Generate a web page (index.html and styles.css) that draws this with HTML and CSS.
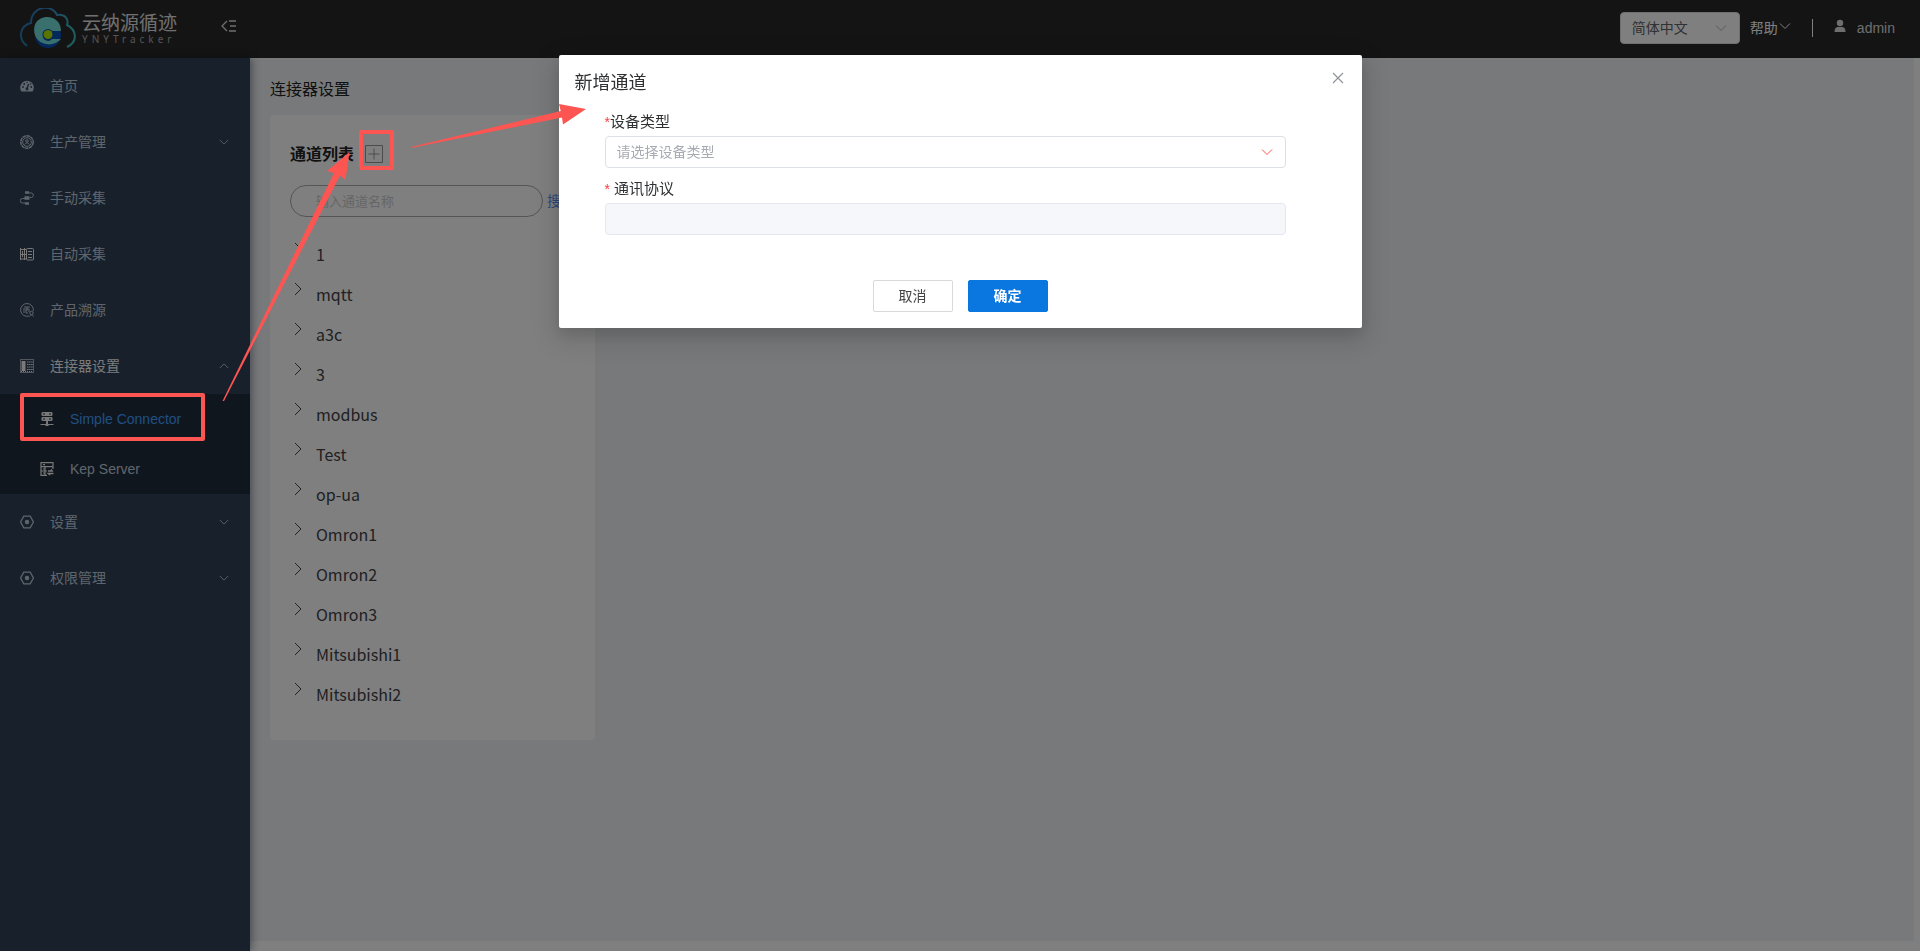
FILE: index.html
```html
<!DOCTYPE html>
<html lang="zh-CN">
<head>
<meta charset="utf-8">
<title>连接器设置</title>
<link rel="stylesheet" href="styles.css">
</head>
<body>
<svg class="defs" aria-hidden="true">
  <symbol id="down" viewBox="0 0 14 14"><path d="M2 4.500l5 5 5-5" fill="none" stroke="currentColor"/></symbol>
  <symbol id="right" viewBox="0 0 14 14"><path d="M4 1l6 6-6 6" fill="none" stroke="currentColor"/></symbol>
  <symbol id="hex" viewBox="0 0 14 14"><path d="M3.800 1.200h6.400L13.400 7l-3.200 5.800H3.800L.6 7z" fill="none" stroke="currentColor" stroke-width="1.200"/><circle cx="7" cy="7" r="2.200" fill="currentColor"/></symbol>
</svg>
<div class="app">
  <header class="topbar">
    <div class="brand">
      <svg class="logo" viewBox="0 0 56 40">
        <defs><linearGradient id="cloud" x1="0" x2="1"><stop offset="0" stop-color="#287cb0"/><stop offset=".5" stop-color="#3984cc"/><stop offset="1" stop-color="#3ec2bc"/></linearGradient></defs>
        <path d="M7 38C-2 31-1 18 11 15 11-3 33-4 37 7c8-1 12 4 10 10 10 5 11 17 0 22" fill="none" stroke="url(#cloud)" stroke-width="2"/>
        <circle cx="28" cy="27" r="13" fill="#0750b8"/>
        <path d="M41 23H29a5 5 0 1 0 3 8h9c-6 7-17 7-23 1C13 27 12 15 20 11c9-5 21 0 21 12z" fill="#72e0dc"/>
        <circle cx="28" cy="26.500" r="5.500" fill="#0a4bb0"/><circle cx="28" cy="26.500" r="4.500" fill="#b5e800"/>
      </svg>
      <div class="brand-text"><span class="brand-name">云纳源循迹</span><span class="brand-sub">YNYTracker</span></div>
    </div>
    <button class="fold" aria-label="收起菜单"><svg viewBox="0 0 16 14"><path d="M6 2L1 7l5 5M8 2h7M9 7h6M8 12h7" fill="none" stroke="currentColor" stroke-width="1.300"/></svg></button>
    <div class="tools">
      <label class="lang"><select aria-label="语言"><option>简体中文</option></select><svg class="ico"><use href="#down"/></svg></label>
      <button class="help">帮助<svg class="ico"><use href="#down"/></svg></button>
      <span class="divider"></span>
      <a class="user" href="#"><svg class="ico" viewBox="0 0 14 14"><circle cx="7" cy="4" r="3.200" fill="currentColor"/><path d="M1.500 13c0-3 1-4.500 3-5h5c2 .5 3 2 3 5z" fill="currentColor"/></svg>admin</a>
    </div>
  </header>
  <div class="body">
    <nav class="sidebar">
      <a class="item" href="#"><svg class="ico" viewBox="0 0 14 14"><path d="M1.500 12.500a6.800 6.800 0 1 1 11 0z" fill="currentColor"/><path d="M7 10l1.500-5" stroke="#304156" stroke-width="1.300"/><g fill="#304156"><circle cx="7" cy="10" r="1.400"/><circle cx="3" cy="8" r=".9"/><circle cx="4.200" cy="5" r=".9"/><circle cx="7" cy="3.500" r=".7"/><circle cx="10.500" cy="5" r=".8"/><circle cx="11.300" cy="8" r=".9"/></g></svg>首页</a>
      <a class="item" href="#"><svg class="ico" viewBox="0 0 14 14" fill="none" stroke="currentColor"><circle cx="7" cy="7" r="6.200" stroke-width="1.500" stroke-dasharray="3.500 .5"/><circle cx="7" cy="7" r="4.300"/><circle cx="7" cy="6" r="1.300"/><path d="M4.800 9.500c.5-2 4-2 4.500 0"/></svg>生产管理<svg class="ico arrow"><use href="#down"/></svg></a>
      <a class="item" href="#"><svg class="ico" viewBox="0 0 14 14" fill="none" stroke="currentColor"><path d="M5 1.500h4M5 12.500h4" stroke-width="2.400"/><path d="M4.500 7h5" stroke-width="3.500"/><path d="M5 7.500H2.500a2 2 0 0 0 0 4.500H5M9 2h2.500a2.300 2.300 0 0 1 0 4.500H10"/></svg>手动采集</a>
      <a class="item" href="#"><svg class="ico bright" viewBox="0 0 14 14" fill="none" stroke="currentColor"><rect x="6.500" y="1.500" width="7" height="11.500" rx="1"/><path d="M8 4.500h4M8 7.500h4M8 10.500h4M4.500 1v12M.5 1v12M0 2.500h6M0 7.500h6M0 12h6M2.500 4v6"/></svg>自动采集</a>
      <a class="item" href="#"><svg class="ico" viewBox="0 0 14 14" fill="none" stroke="currentColor"><path d="M9 13A6.400 6.400 0 1 1 13.300 8"/><path d="M4 4h6M5 6h4v3M4 5v5M6 7v3h2M7 4v4"/><circle cx="11.500" cy="10" r="1.700"/><path d="M9.500 13.500c.5-2 3.500-2 4 0"/></svg>产品溯源</a>
      <a class="item open" href="#"><svg class="ico" viewBox="0 0 14 14" fill="none" stroke="currentColor"><rect x=".5" y=".5" width="13" height="13" stroke-opacity=".6"/><path d="M3.500 2v10" stroke-width="4"/><path d="M7 3h6M7 5.500h6M7 8h6M7 10.500h6" stroke-dasharray="1.500 .6"/><path d="M1 12.500h12" stroke-dasharray="1 1"/></svg>连接器设置<svg class="ico arrow up"><use href="#down"/></svg></a>
      <div class="submenu">
        <a class="subitem current" href="#"><svg class="ico bright" viewBox="0 0 14 14"><g fill="currentColor"><rect x="1.500" y="0" width="11" height="4" rx="1.300"/><rect x="1.500" y="5" width="11" height="4" rx="1.300"/><path d="M6 9h2v3h5.500v1H8.500v1h-3v-1H.5v-1H6z"/></g><path d="M3 2h2M9 2h2M3 7h2M9 7h2" stroke="#1f2d3d"/></svg>Simple Connector</a>
        <a class="subitem" href="#"><svg class="ico bright" viewBox="0 0 14 14" fill="none" stroke="currentColor" stroke-width="1.200"><path d="M1 .7h12v4H1zM1 4.700v8.600h6M1 9h6M13 4.700V7M3 2.700h2M3 7h2M3 11h2M5 5v8"/><path d="M8 9h4l-1-1.500M13.500 11.500H8.500l1.500 1.500" stroke-width="1.600"/></svg>Kep Server</a>
      </div>
      <a class="item" href="#"><svg class="ico"><use href="#hex"/></svg>设置<svg class="ico arrow"><use href="#down"/></svg></a>
      <a class="item" href="#"><svg class="ico"><use href="#hex"/></svg>权限管理<svg class="ico arrow"><use href="#down"/></svg></a>
    </nav>
    <main class="content">
      <h1 class="page-title">连接器设置</h1>
      <section class="card">
        <div class="card-head"><h2>通道列表</h2><button class="add" aria-label="新增"><svg viewBox="0 0 18 18"><path d="M.5.5h17v17H.5zM9 3.500v11M3.500 9h11" fill="none" stroke="currentColor"/></svg></button></div>
        <div class="search"><input type="text" aria-label="通道名称" placeholder="输入通道名称"><a href="#">搜索</a></div>
        <ul class="channels">
          <li><svg class="ico"><use href="#right"/></svg>1</li>
          <li><svg class="ico"><use href="#right"/></svg>mqtt</li>
          <li><svg class="ico"><use href="#right"/></svg>a3c</li>
          <li><svg class="ico"><use href="#right"/></svg>3</li>
          <li><svg class="ico"><use href="#right"/></svg>modbus</li>
          <li><svg class="ico"><use href="#right"/></svg>Test</li>
          <li><svg class="ico"><use href="#right"/></svg>op-ua</li>
          <li><svg class="ico"><use href="#right"/></svg>Omron1</li>
          <li><svg class="ico"><use href="#right"/></svg>Omron2</li>
          <li><svg class="ico"><use href="#right"/></svg>Omron3</li>
          <li><svg class="ico"><use href="#right"/></svg>Mitsubishi1</li>
          <li><svg class="ico"><use href="#right"/></svg>Mitsubishi2</li>
        </ul>
      </section>
    </main>
  </div>
</div>
<div class="mask">
  <div class="dialog" role="dialog" aria-labelledby="dlg-title">
    <div class="dialog-head"><h2 id="dlg-title">新增通道</h2><button class="close" aria-label="关闭"><svg class="ico" viewBox="0 0 14 14"><path d="M2 2l10 10M12 2L2 12" fill="none" stroke="currentColor" stroke-width="1.200"/></svg></button></div>
    <form class="form">
      <label class="label tight" for="type"><span class="star">*</span>设备类型</label>
      <div class="picker"><select id="type"><option>请选择设备类型</option></select><svg class="ico"><use href="#down"/></svg></div>
      <label class="label" for="proto"><span class="star">*</span>通讯协议</label>
      <input class="disabled-input" id="proto" type="text" disabled>
      <div class="actions"><button type="button" class="btn">取消</button><button type="button" class="btn primary">确定</button></div>
    </form>
  </div>
</div>
<svg class="marks" aria-hidden="true">
  <g fill="none" stroke="#fc5552" stroke-width="4" stroke-linejoin="round"><rect x="22" y="395" width="181" height="44"/><rect x="361" y="132" width="31" height="36"/></g>
  <g fill="#fc5552"><path d="M222.500 401L334 173l-7-2 22.500-19-4 28-5.500-4.500L224 401z"/><path d="M411 147l149.700-36-1.700-7 27 5-23 15.500-1-7L411 148z"/></g>
</svg>
</body>
</html>
```

FILE: styles.css
```css
* { box-sizing: border-box; }
body { margin: 0; font: 14px/20px "Liberation Sans", "Noto Sans CJK SC", sans-serif; color: #303133; }
a { color: inherit; text-decoration: none; }
button, select, input { font: inherit; color: inherit; }
button { padding: 0; border: 0; background: none; cursor: pointer; }
h1, h2 { margin: 0; font-weight: 400; }
.defs { display: none; }
.ico { width: 14px; height: 14px; flex: none; display: block; }

.app { min-height: 100vh; display: flex; flex-direction: column; }
.topbar { height: 58px; padding-bottom: 2px; display: flex; align-items: center; background: #282828; color: #fff; }
.brand { width: 221px; padding-left: 20px; display: flex; align-items: center; gap: 6px; }
.logo { width: 56px; height: 40px; }
.brand-text { padding-bottom: 2px; display: flex; flex-direction: column; color: #e0e0e0; }
.brand-name { font: 19px/24px "Noto Sans CJK SC", sans-serif; }
.brand-sub { font: 10px/10px "Noto Sans", sans-serif; letter-spacing: 4px; color: #aaa; }
.fold { width: 18px; height: 18px; margin-bottom: 6px; color: #ddd; }
.fold svg { width: 16px; height: 14px; display: block; margin-top: 2px; }
.tools { margin-left: auto; padding-right: 25px; display: flex; align-items: center; }
.lang, .picker { display: grid; align-items: center; }
.lang > *, .picker > * { grid-area: 1 / 1; }
.lang > svg, .picker > svg { justify-self: end; margin-right: 12px; pointer-events: none; color: #b0b3ba; }
.lang select { width: 120px; height: 32px; padding: 0 11px; appearance: none; border: 1px solid #dcdfe6; border-radius: 4px; background: #fff; color: #606266; }
.help { margin-left: 10px; display: flex; align-items: center; color: #fff; }
.help svg { margin-bottom: 4px; }
.divider { width: 1px; height: 18px; margin: 0 20px; background: #fff; }
.user { display: flex; align-items: center; gap: 10px; color: #ddd; }
.user svg { margin-bottom: 4px; }

.body { flex: 1; display: flex; }
.sidebar { width: 250px; flex: none; background: #304156; color: #bfcbd9; box-shadow: 2px 0 8px rgba(0, 21, 41, .4); z-index: 1; }
.item, .subitem { display: flex; align-items: center; gap: 16px; }
.item { height: 56px; padding: 0 20px; }
.subitem { height: 50px; padding-left: 40px; }
.submenu { background: #1f2d3d; }
.open { color: #f4f4f5; }
.open .arrow { color: #bfcbd9; }
.current { color: #409eff; }
.bright { color: #f0f0f0; }
.arrow { margin-left: auto; }
.item .arrow { width: 12px; height: 12px; }
.up { transform: rotate(180deg); }

.content { flex: 1; margin: 0 6px 10px 0; padding: 22px 20px; background: #f0f2f5; }
.page-title { font-size: 16px; line-height: 20px; color: #222; }
.card { width: 325px; margin-top: 15px; padding: 27px 20px 28px; border-radius: 4px; background: #fff; }
.card-head { display: flex; align-items: center; gap: 11px; }
.card-head h2 { font-size: 16px; line-height: 26px; font-weight: 700; color: #222; }
.add { width: 18px; height: 18px; margin-bottom: 2px; color: #999; }
.add svg { display: block; }
.search { margin-top: 17px; display: flex; align-items: center; gap: 4px; white-space: nowrap; }
.search input { width: 253px; height: 32px; flex: none; padding: 0 25px; border: 1px solid #aaa; border-radius: 16px; background: #fff; font-size: 13px; }
.search input::placeholder { color: #ccc; opacity: 1; }
.search a { color: #5a8df0; }
.channels { list-style: none; margin: 15px 0 0; padding: 0; font: 16px/24px "Noto Sans CJK SC", sans-serif; }
.channels li { height: 40px; padding-top: 10px; padding-left: 1px; display: flex; gap: 11px; color: #404245; }

.mask { position: fixed; inset: 0; padding-top: 55px; display: flex; justify-content: center; align-items: flex-start; background: rgba(0, 0, 0, .5); z-index: 2; }
.dialog { width: 803px; max-width: 90%; padding: 16px; border-radius: 2px; background: #fff; box-shadow: 0 6px 16px rgba(0, 0, 0, .12), 0 9px 28px 8px rgba(0, 0, 0, .1); }
.dialog-head { display: flex; justify-content: space-between; align-items: flex-start; }
.dialog-head h2 { font-size: 18px; line-height: 24px; }
.close { color: #909399; padding-right: 1px; }
.form { padding: 15px 60px 0 30px; }
.label { display: flex; gap: 4px; font-size: 15px; line-height: 24px; color: #303133; }
.tight { gap: 0; }
.star { color: #fc3d39; font-size: 14px; }
.picker { margin: 2px 0 9px; }
.picker select, .disabled-input { display: block; width: 100%; height: 32px; padding: 0 11px; border: 1px solid #dcdfe6; border-radius: 4px; background: #fff; color: #a8abb2; appearance: none; }
.picker > svg { color: #fc5552; }
.disabled-input { margin-top: 2px; background: #f5f7fa; border-color: #e4e7ed; }
.actions { margin-top: 45px; padding-left: 30px; display: flex; justify-content: center; gap: 15px; }
.btn { width: 80px; height: 32px; border: 1px solid #d9d9d9; border-radius: 2px; color: #444; }
.primary { border-color: #0a76df; background: #0a76df; color: #fff; font-weight: 700; }

.marks { position: absolute; left: 0; top: 0; width: 600px; height: 460px; z-index: 3; pointer-events: none; }
```
